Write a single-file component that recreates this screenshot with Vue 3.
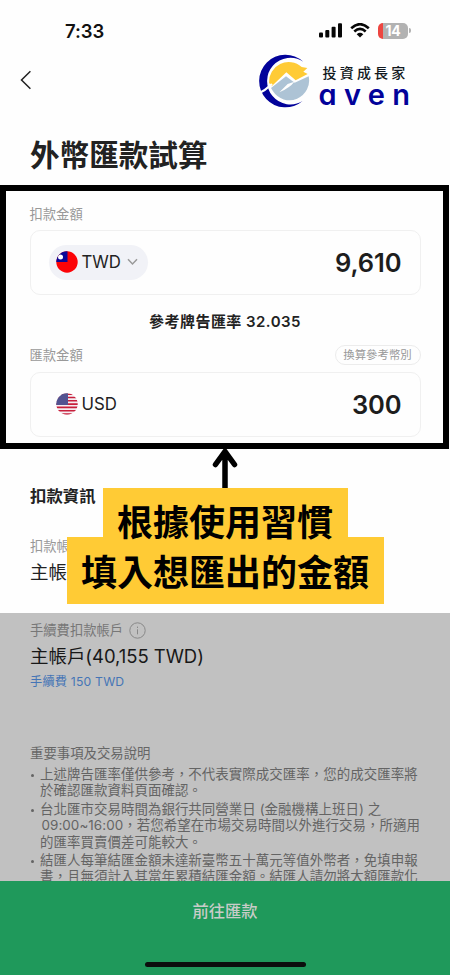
<script setup>
const notes = [
  ['上述牌告匯率僅供參考，不代表實際成交匯率，您的成交匯率將', '於確認匯款資料頁面確認。'],
  ['台北匯市交易時間為銀行共同營業日 (金融機構上班日) 之', '09:00~16:00，若您希望在市場交易時間以外進行交易，所適用', '的匯率買賣價差可能較大。'],
  ['結匯人每筆結匯金額未達新臺幣五十萬元等值外幣者，免填申報', '書，且無須計入其當年累積結匯金額。結匯人請勿將大額匯款化']
]
</script>

<template>
  <div class="screen">
    <header class="top">
      <div class="status">
        <span class="time">7:33</span>
        <div class="indicators">
          <svg class="signal" viewBox="0 0 23 15">
            <rect x="0" y="9.5" width="4" height="5" rx="1" />
            <rect x="6.3" y="7" width="4" height="7.5" rx="1" />
            <rect x="12.6" y="3.8" width="4" height="10.7" rx="1" />
            <rect x="19" y="0.3" width="4" height="14.2" rx="1" />
          </svg>
          <svg class="wifi" viewBox="0 0 20 15">
            <path d="M1.2 5.2 Q10 -2.8 18.8 5.2" />
            <path d="M4.3 8.5 Q10 3.3 15.7 8.5" />
            <path class="dot" d="M6.7 11.2 Q10 8.3 13.3 11.2 L10 14.6 Z" />
          </svg>
          <div class="battery"><span>14</span></div>
          <i class="cap"></i>
        </div>
      </div>
      <div class="nav">
        <svg class="back" viewBox="0 0 12 20"><path d="M10.4 1.2 L1.5 10 L10.4 18.8" /></svg>
        <div class="brand">
          <svg class="mark" viewBox="95 158 165 168">
            <path fill="#02029a" d="M237 187 A79 79 0 1 0 235 305 A70 70 0 1 1 237 187 Z" />
            <path fill="#ffcb35" d="M134 250 A59 59 0 0 1 232 203 L249 206 L237 217 L250 224 L214 243 L186 219 L142 261 Z" />
            <path fill="#adc3d5" d="M140 266 L185 231 L211 250 L253 231 A59 59 0 0 1 146 276 Z" />
            <path class="gap" d="M100 284 Q122 274 143 254" />
            <path class="slope" d="M210 247 Q198 264 165 279 Q181 263 190 254 Z" />
          </svg>
          <div class="words">
            <span class="brand-cn">投資成長家</span>
            <span class="brand-en">aven</span>
          </div>
        </div>
      </div>
      <h1>外幣匯款試算</h1>
    </header>

    <section class="frame">
      <div class="label-row first"><span>扣款金額</span></div>
      <div class="amount">
        <div class="currency pill">
          <svg class="flag" viewBox="0 0 22 22">
            <defs><clipPath id="tw"><circle cx="11" cy="11" r="10.7" /></clipPath></defs>
            <g clip-path="url(#tw)">
              <rect width="22" height="22" fill="#fc0307" />
              <rect width="11.5" height="11" fill="#0a0798" />
              <circle cx="4.5" cy="6" r="2.5" fill="#fff" />
            </g>
          </svg>
          <span>TWD</span>
          <svg class="chevron" viewBox="0 0 11 8"><path d="M1 1.3 L5.5 6 L10 1.3" /></svg>
        </div>
        <strong>9,610</strong>
      </div>
      <div class="rate">參考牌告匯率 32.035</div>
      <div class="label-row second"><span>匯款金額</span><span class="tag">換算參考幣別</span></div>
      <div class="amount">
        <div class="currency">
          <svg class="flag" viewBox="0 0 22 22">
            <defs><clipPath id="us"><circle cx="11" cy="11" r="10.7" /></clipPath></defs>
            <g clip-path="url(#us)">
              <rect width="22" height="22" fill="#f5eef2" />
              <path d="M0 1.2H22M0 4.5H22M0 7.8H22M0 11.1H22M0 14.4H22M0 17.7H22M0 21H22" stroke="#c8203c" stroke-width="1.6" />
              <rect width="12" height="12" fill="#525290" />
            </g>
          </svg>
          <span>USD</span>
        </div>
        <strong>300</strong>
      </div>
    </section>

    <section class="debit">
      <h2>扣款資訊</h2>
      <p class="label">扣款帳戶</p>
      <p class="account">主帳戶</p>
    </section>

    <section class="shade">
      <p class="label fee">手續費扣款帳戶
        <svg class="info" viewBox="0 0 17 17"><circle cx="8.5" cy="8.5" r="7.7" /><path d="M8.5 7.3V12.3M8.5 4.6V6" /></svg>
      </p>
      <p class="account">主帳戶(40,155 TWD)</p>
      <p class="cost">手續費 150 TWD</p>
      <h3>重要事項及交易說明</h3>
      <ul>
        <li v-for="(note, i) in notes" :key="i">
          <span v-for="line in note" :key="line" class="line" :class="{ hours: line.startsWith('09') }">{{ line }}</span>
        </li>
      </ul>
    </section>

    <footer>
      <span>前往匯款</span>
      <i class="home"></i>
    </footer>

    <div class="callout">
      <svg class="arrow" viewBox="0 0 28 40"><path d="M14 42V4M4.5 16.5 L14 3.5 L23.5 16.5" /></svg>
      <div class="hint upper"><span>根據使用習慣</span></div>
      <div class="hint lower"><span>填入想匯出的金額</span></div>
    </div>
  </div>
</template>

<style>
body { margin: 0; background: #fefefe; }
</style>

<style scoped>
* { box-sizing: border-box; }
.screen { position: relative; display: flex; flex-direction: column; width: 450px; height: 975px; overflow: hidden; background: #fefefe; color: #222; font-family: Inter, "Noto Sans CJK TC", sans-serif; white-space: nowrap; }
h1, h2, h3, p, ul { margin: 0; padding: 0; font-weight: 400; }
svg { display: block; flex: none; fill: none; }
.top { height: 185px; flex: none; }
.status { display: flex; justify-content: space-between; align-items: center; height: 52px; padding: 9px 39px 0 65px; }
.time { font-size: 18.5px; font-weight: 600; color: #111; letter-spacing: -0.1px; }
.indicators { display: flex; align-items: center; }
.signal { width: 23px; height: 15px; fill: #070707; margin-right: 8px; }
.wifi { width: 20px; height: 15px; margin-right: 8px; stroke: #070707; stroke-width: 2.6; }
.wifi .dot { fill: #070707; stroke: none; }
.battery { display: flex; align-items: center; justify-content: center; width: 30px; height: 16px; border-radius: 5px; background: linear-gradient(90deg, #ed4641 0 5px, #b2b2b2 5px); color: #fff; font-size: 14px; font-weight: 700; letter-spacing: -0.3px; }
.cap { width: 2px; height: 5px; margin-left: 1px; border-radius: 0 2px 2px 0; background: #b2b2b2; }
.nav { display: flex; justify-content: space-between; align-items: center; height: 56px; padding: 0 36px 0 20px; }
.back { width: 12px; height: 20px; stroke: #222; stroke-width: 1.5; }
.brand { display: flex; align-items: center; width: 157.5px; gap: 8px; }
.mark { width: 55px; height: 56px; margin-left: -1px; }
.gap { stroke: #fefefe; stroke-width: 7; }
.slope { fill: #fefefe; }
.words { display: flex; flex-direction: column; height: 56px; padding-top: 12px; }
.brand-cn { margin-left: 4px; font-size: 14px; line-height: 17px; letter-spacing: 3.2px; font-weight: 500; color: #111820; }
.brand-en { font-size: 29px; line-height: 27px; letter-spacing: 7.3px; font-weight: 600; color: #02029a; font-feature-settings: "cv11"; }
h1 { padding: 27px 0 0 30px; font-size: 29.6px; line-height: 40px; font-weight: 700; color: #222; }
.frame { height: 264px; flex: none; width: 449px; border: 6px solid #000; padding: 0 22.5px 0 23.5px; }
.label-row { display: flex; justify-content: space-between; align-items: center; height: 35px; color: #999; font-size: 13.3px; }
.label-row.first { height: 39px; padding-top: 5px; }
.tag { border: 1px solid #ececec; border-radius: 10px; height: 20px; width: 86px; line-height: 18px; font-size: 11.4px; text-align: center; }
.amount { display: flex; align-items: center; justify-content: space-between; height: 64.5px; border: 1.5px solid #f0f0f0; border-radius: 10px; padding: 0 18px; }
.amount strong { font-size: 25.5px; font-weight: 600; letter-spacing: -0.1px; color: #1d1d1d; }
.currency { display: flex; align-items: center; height: 35px; padding: 0 10px 0 7px; border-radius: 18px; font-size: 16.8px; color: #222; }
.pill { background: #f1f2f7; width: 99px; }
.flag { width: 22px; height: 22px; margin-right: 4px; }
.chevron { width: 11px; height: 8px; margin-left: auto; stroke: #999; stroke-width: 1.5; }
.rate { height: 42.5px; padding-top: 5px; line-height: 43px; text-align: center; font-size: 15px; letter-spacing: 0.45px; font-weight: 600; }
.debit { height: 164px; flex: none; padding: 35px 30px 0; }
h2 { font-size: 16.4px; line-height: 24px; font-weight: 600; color: #222; }
.label { font-size: 13.3px; line-height: 20px; color: #999; }
.debit .label { margin-top: 28px; }
.account { font-size: 18.5px; line-height: 26px; color: #222; margin-top: 3px; }
.shade { height: 268px; flex: none; overflow: hidden; background: #c1c1c1; padding: 7px 0 0 30px; }
.shade .label { display: flex; align-items: center; gap: 6px; color: #777; }
.info { width: 17px; height: 17px; stroke: #888; stroke-width: 1; }
.shade .account { color: #181818; letter-spacing: -0.05px; }
.cost { font-size: 12.2px; line-height: 18px; margin-top: 4px; letter-spacing: 0.2px; color: #4575b6; }
h3 { margin-top: 52px; font-size: 13.4px; line-height: 20px; color: #666; }
ul { list-style: none; display: flex; flex-direction: column; gap: 2px; margin-top: 3px; }
li { position: relative; display: flex; flex-direction: column; padding-left: 10px; font-size: 13.45px; letter-spacing: 0.05px; line-height: 16.4px; color: #646464; }
.hours { padding-left: 1.5px; }
li::before { content: ""; position: absolute; left: 1px; top: 8px; width: 3px; height: 3px; border-radius: 50%; background: #646464; }
footer { height: 94px; flex: none; display: flex; flex-direction: column; align-items: center; justify-content: space-between; background: #1f995b; padding: 18px 0 8px; }
footer span { font-size: 16.3px; line-height: 24px; font-weight: 500; color: #c8ccc8; }
.home { width: 161px; height: 5px; border-radius: 3px; background: #0b0f0d; }
.callout { position: absolute; left: 66.5px; top: 448px; width: 317px; display: flex; flex-direction: column; align-items: center; }
.arrow { width: 28px; height: 40px; stroke: #000; stroke-width: 5.5; stroke-linecap: round; }
.hint { background: #ffcb35; color: #000; font-size: 36px; font-weight: 700; text-align: center; }
.hint span { position: relative; z-index: 1; }
.upper { width: 245px; height: 49px; line-height: 71px; }
.lower { width: 317px; height: 67px; line-height: 72px; }
</style>
